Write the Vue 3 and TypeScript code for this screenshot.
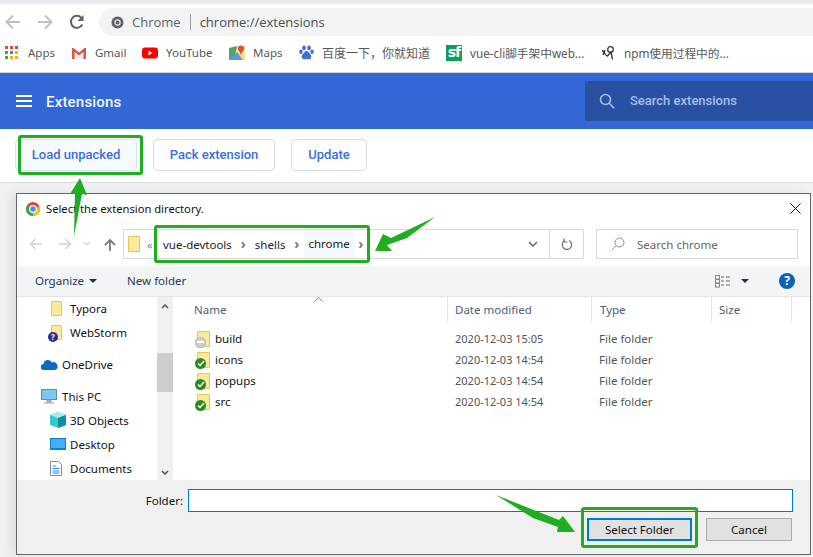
<template>
  <div class="page">
    <div class="top-strip"></div>
    <div class="toolbar">
      <svg class="nav-ico" width="16" height="16" viewBox="0 0 16 16"><path d="M15 8H2M8 1.500 1.500 8 8 14.500" class="arrow-off" /></svg>
      <svg class="nav-ico fwd" width="16" height="16" viewBox="0 0 16 16"><path d="M1 8h13M8 1.500 14.500 8 8 14.500" class="arrow-off" /></svg>
      <svg class="nav-ico reload" width="16" height="16" viewBox="0 0 16 16"><path d="M13.300 10.500A6 6 0 1 1 12.400 3.800" fill="none" stroke="#5f6368" stroke-width="2" /><path d="M14.500 1v6h-6z" fill="#5f6368" /></svg>
      <div class="omnibox">
        <svg width="13" height="13" viewBox="0 0 13 13"><circle cx="6.500" cy="6.500" r="6" fill="#5f6368" /><circle cx="6.500" cy="6.500" r="2.600" fill="#5f6368" stroke="#e8eaed" stroke-width="1.200" /></svg>
        <span class="omni-site">Chrome</span>
        <span class="omni-sep"></span>
        <span class="omni-url">chrome://extensions</span>
      </div>
    </div>

    <div class="bookmarks">
      <div class="bm apps">
        <div class="apps-grid"><i v-for="(c, i) in appDots" :key="i" :style="{ background: c }"></i></div>
        <span>Apps</span>
      </div>
      <div class="bm gmail">
        <svg width="16" height="12" viewBox="0 0 16 12"><path d="M3 12V5l5 4 5-4v7z" fill="#eeeeee" /><path d="M1 12V1h1.500L8 5.500 13.500 1H15v11h-2.500V5L8 8.500 3.500 5v7z" fill="#d8574a" /></svg>
        <span>Gmail</span>
      </div>
      <div class="bm youtube">
        <svg width="16" height="12" viewBox="0 0 16 12"><rect width="16" height="11" y="0.500" rx="3" fill="#f00" /><path d="m6.500 3.500 4 2.500-4 2.500z" fill="#fff" /></svg>
        <span>YouTube</span>
      </div>
      <div class="bm maps">
        <svg width="16" height="15" viewBox="0 0 16 15"><path d="M0 3 8 1v13l-8 1z" fill="#4fa564" /><path d="M8 1h8v14H5z" fill="#f3e08a" /><path d="M0 15 8 7l6 8z" fill="#5a9ae8" /><circle cx="12" cy="3.500" r="3" fill="#d84b3e" /><path d="m10 5 2 5 2-5z" fill="#d84b3e" /></svg>
        <span>Maps</span>
      </div>
      <div class="bm baidu">
        <svg width="15" height="15" viewBox="0 0 15 15" fill="#3e6fdc"><ellipse cx="5" cy="3" rx="1.800" ry="2.400" /><ellipse cx="10" cy="3" rx="1.800" ry="2.400" /><ellipse cx="1.900" cy="6.800" rx="1.700" ry="2.200" /><ellipse cx="13.100" cy="6.800" rx="1.700" ry="2.200" /><path d="M7.500 6c2 0 2.500 2 4 3.500s1 5-2 5c-1 0-1.300-.4-2-.4s-1 .4-2 .4c-3 0-3.500-3.500-2-5S5.500 6 7.500 6z" /></svg>
        <span class="cjk">百度一下，你就知道</span>
      </div>
      <div class="bm sf">
        <div class="sf-logo">sf</div>
        <span class="cjk">vue-cli脚手架中web...</span>
      </div>
      <div class="bm npm">
        <svg width="15" height="15" viewBox="0 0 15 15" fill="none" stroke="#333" stroke-width="1.300"><circle cx="9.500" cy="4.500" r="2.800" /><path d="M1 5.500c2 .5 3 5 5.500 5.500L10 7l1.500 7.500M2 10l2-5" /></svg>
        <span class="cjk">npm使用过程中的...</span>
      </div>
    </div>

    <header class="ext-header">
      <div class="burger"><i></i><i></i><i></i></div>
      <h1>Extensions</h1>
      <div class="ext-search">
        <svg width="16" height="16" viewBox="0 0 16 16" fill="none" stroke="#a8bde8" stroke-width="1.600"><circle cx="6.500" cy="6.500" r="5" /><path d="m10.200 10.200 5 5" /></svg>
        <span>Search extensions</span>
      </div>
    </header>

    <div class="ext-actions">
      <button class="ext-btn first">Load unpacked</button>
      <button class="ext-btn pack">Pack extension</button>
      <button class="ext-btn update">Update</button>
    </div>

    <div class="dialog">
      <div class="title-row">
        <svg width="14" height="14" viewBox="0 0 14 14"><circle cx="7" cy="7" r="7" fill="#e0453a" /><path d="M7 7 1 3.500A7 7 0 0 0 7 14z" fill="#35a853" /><path d="M7 7v7a7 7 0 0 0 6.500-9.500z" fill="#fbc115" /><circle cx="7" cy="7" r="3.300" fill="#4a8cf0" stroke="#fff" stroke-width="1.200" /></svg>
        <span class="title-text">Select the extension directory.</span>
        <svg class="close" width="11" height="11" viewBox="0 0 11 11"><path d="m.5.500 10 10m0-10-10 10" stroke="#111" stroke-width="1" /></svg>
      </div>

      <div class="path-row">
        <svg width="14" height="12" viewBox="0 0 14 12" class="dlg-arrow"><path d="M13 6H2M6.500 1 1.500 6l5 5" fill="none" stroke="#d4d4d4" stroke-width="1.500" /></svg>
        <svg width="14" height="12" viewBox="0 0 14 12" class="dlg-arrow fwd2"><path d="M1 6h11M7.500 1l5 5-5 5" fill="none" stroke="#d4d4d4" stroke-width="1.500" /></svg>
        <svg width="8" height="6" viewBox="0 0 8 6" class="dlg-drop"><path d="m1 1 3 3 3-3" fill="none" stroke="#d4d4d4" stroke-width="1.200" /></svg>
        <svg width="12" height="13" viewBox="0 0 12 13" class="dlg-up"><path d="M6 13V2M1 7l5-5 5 5" fill="none" stroke="#7a7a7a" stroke-width="1.800" /></svg>
        <div class="address">
          <div class="folder-ico crumb-folder"></div>
          <span class="chev-double">«</span>
          <span class="crumb c1">vue-devtools</span><span class="sep">›</span>
          <span class="crumb c2">shells</span><span class="sep">›</span>
          <span class="crumb c3">chrome</span><span class="sep last">›</span>
          <div class="addr-end">
            <svg width="10" height="6" viewBox="0 0 10 6"><path d="m1 1 4 4 4-4" fill="none" stroke="#666" stroke-width="1.500" /></svg>
          </div>
          <div class="addr-refresh">
            <svg width="12" height="13" viewBox="0 0 12 13"><path d="M3.500 2.800a4.700 4.700 0 1 0 4.500-.2" fill="none" stroke="#777" stroke-width="1.300" /><path d="M3 .5v3.500h3.500" fill="none" stroke="#777" stroke-width="1.200" /></svg>
          </div>
        </div>
        <div class="dlg-search">
          <svg width="14" height="14" viewBox="0 0 14 14" fill="none" stroke="#8a8a8a"><circle cx="8.500" cy="5.500" r="4.500" /><path d="m5.200 8.800-4.500 4.500" stroke="#c0856a" /></svg>
          <span>Search chrome</span>
        </div>
      </div>

      <div class="command-bar">
        <span class="cmd organize">Organize</span>
        <i class="caret"></i>
        <span class="cmd newfolder">New folder</span>
        <svg class="view-ico" width="16" height="13" viewBox="0 0 16 13" fill="none" stroke="#8a8a8a"><rect x=".5" y=".5" width="4" height="3.500" /><rect x=".5" y="4.500" width="4" height="3.500" /><rect x=".5" y="8.500" width="4" height="3.500" stroke="#c66" /><path d="M6 2h3m2 0h4M6 6h3m2 0h4M6 10h3m2 0h4" stroke="#666" /></svg>
        <i class="caret view-caret"></i>
        <div class="help">?</div>
      </div>

      <div class="browser">
        <aside class="tree">
          <div v-for="n in treeItems" :key="n.label" class="tree-item" :class="n.cls">
            <span class="tree-ico">
              <template v-if="n.icon === 'folder'"><div class="folder-ico"></div></template>
              <template v-else-if="n.icon === 'webstorm'"><div class="folder-ico"></div><b class="q-badge">?</b></template>
              <svg v-else-if="n.icon === 'cloud'" width="17" height="11" viewBox="0 0 17 11"><path d="M3 11a3 3 0 0 1-.5-6A4.500 4.500 0 0 1 11 3.500 3.500 3.500 0 0 1 14 11z" fill="#0f68c8" /></svg>
              <svg v-else-if="n.icon === 'pc'" width="16" height="15" viewBox="0 0 16 15"><rect x=".5" y=".5" width="15" height="10" fill="#7cc8f5" stroke="#6b8aa0" /><path d="M6 11h4v2H6zM3 14h10" stroke="#8a9aa8" fill="#ccd" /></svg>
              <svg v-else-if="n.icon === 'cube'" width="16" height="16" viewBox="0 0 16 16"><path d="M8 0 16 3v10l-8 3-8-3V3z" fill="#3dc5cf" /><path d="M0 3l8 3 8-3-8-3z" fill="#a7edf0" /><path d="M8 6v10l8-3V3z" fill="#0e8ea5" /></svg>
              <svg v-else-if="n.icon === 'desktop'" width="16" height="12" viewBox="0 0 16 12"><rect width="16" height="12" fill="#0f7fd6" /><rect x="1" y="1" width="14" height="9" fill="#45aef0" /></svg>
              <svg v-else width="12" height="15" viewBox="0 0 12 15"><path d="M.5.500h8l3 3v11H.5z" fill="#fff" stroke="#8a8a8a" /><path d="M2.500 5h4M2.500 7.500h7M2.500 10h7M2.500 12h7" stroke="#2c86d8" /></svg>
            </span>
            <span class="tree-label">{{ n.label }}</span>
          </div>
        </aside>
        <div class="tree-scroll">
          <svg width="8" height="5" viewBox="0 0 8 5"><path d="m1 4 3-3 3 3" fill="none" stroke="#555" stroke-width="1.500" /></svg>
          <div class="thumb"></div>
          <svg class="down" width="8" height="5" viewBox="0 0 8 5"><path d="m1 1 3 3 3-3" fill="none" stroke="#555" stroke-width="1.500" /></svg>
        </div>
        <div class="files">
          <div class="file-head">
            <span class="h-name">Name</span>
            <span class="h-date">Date modified</span>
            <span class="h-type">Type</span>
            <span class="h-size">Size</span>
            <svg class="sort-caret" width="9" height="5" viewBox="0 0 9 5"><path d="m.5 4.500 4-4 4 4" fill="none" stroke="#888" /></svg>
          </div>
          <div class="file-list">
            <div v-for="f in files" :key="f.name" class="file-row">
              <span class="file-ico">
                <div class="folder-ico"></div>
                <i class="file-badge" :class="{ skip: f.skip }"><svg v-if="!f.skip" width="8" height="7" viewBox="0 0 8 7"><path d="m1 3.500 2 2 4-4.500" fill="none" stroke="#fff" stroke-width="1.500" /></svg></i>
              </span>
              <span class="f-name">{{ f.name }}</span>
              <span class="f-date">{{ f.date }}</span>
              <span class="f-type">File folder</span>
            </div>
          </div>
        </div>
      </div>

      <div class="footer">
        <div class="folder-row">
          <label>Folder:</label>
          <div class="folder-input"></div>
        </div>
        <div class="footer-btns">
          <button class="win-btn primary">Select Folder</button>
          <button class="win-btn cancel">Cancel</button>
        </div>
      </div>
    </div>

    <!-- annotations drawn on top of the screenshot -->
    <div class="mark m1"></div>
    <div class="mark m2"></div>
    <div class="mark m3"></div>
    <svg class="arrows" width="813" height="557" viewBox="0 0 813 557">
      <path d="M80 178 87 195 82 194 74 236 75 193 70 194z" fill="#1fae1f" />
      <path d="M375 251 383 234 391 238 435 217 407 238 387 245 392 251z" fill="#1fae1f" />
      <path d="M496 495 559 520 563 516 575 532 557 532 558 527 533 518z" fill="#1fae1f" />
    </svg>
  </div>
</template>

<script setup lang="ts">
interface TreeItem {
  label: string
  icon: string
  cls: string
}

const appDots = ['#e8453c', '#e8453c', '#e8453c', '#34a853', '#4285f4', '#f4b400', '#34a853', '#f4b400', '#f4b400']

const treeItems: TreeItem[] = [
  { label: 'Typora', icon: 'folder', cls: 'lvl2' },
  { label: 'WebStorm', icon: 'webstorm', cls: 'lvl2' },
  { label: 'OneDrive', icon: 'cloud', cls: 'lvl1 gap' },
  { label: 'This PC', icon: 'pc', cls: 'lvl1 gap' },
  { label: '3D Objects', icon: 'cube', cls: 'lvl2' },
  { label: 'Desktop', icon: 'desktop', cls: 'lvl2' },
  { label: 'Documents', icon: 'doc', cls: 'lvl2' },
]

const files = [
  { name: 'build', date: '2020-12-03 15:05', skip: true },
  { name: 'icons', date: '2020-12-03 14:54', skip: false },
  { name: 'popups', date: '2020-12-03 14:54', skip: false },
  { name: 'src', date: '2020-12-03 14:54', skip: false },
]
</script>

<style>
html, body {
  margin: 0;
  background: #fff;
}
</style>

<style scoped>
.page {
  position: relative;
  width: 813px;
  height: 557px;
  overflow: hidden;
  background: #f1f2f3;
  font-family: "Noto Sans", "Noto Sans CJK SC", sans-serif;
}
.top-strip {
  height: 4px;
  background: #e8eaed;
}
.toolbar {
  height: 32px;
  background: #fff;
  display: flex;
  align-items: center;
  padding: 4px 0 0 5px;
  box-sizing: border-box;
}
.nav-ico {
  flex: none;
}
.nav-ico.fwd {
  margin-left: 16px;
}
.nav-ico.reload {
  margin-left: 16px;
}
.arrow-off {
  fill: none;
  stroke: #bdc1c6;
  stroke-width: 2;
}
.omnibox {
  flex: 1;
  margin-left: 14px;
  height: 28px;
  border-radius: 14px 0 0 14px;
  background: #f1f3f4;
  display: flex;
  align-items: center;
  padding-left: 12px;
  font-family: "Open Sans", sans-serif;
  font-size: 13px;
}
.omni-site {
  margin-left: 8px;
  color: #5f6368;
}
.omni-sep {
  width: 1px;
  height: 16px;
  background: #9aa0a6;
  margin: 0 9px;
}
.omni-url {
  color: #4a4d51;
}
.bookmarks {
  height: 37px;
  background: #fff;
  border-bottom: 1px solid #d3d5d8;
  box-sizing: border-box;
  display: flex;
  align-items: center;
  padding: 0 0 3px 5px;
  font-size: 11.500px;
  color: #55585c;
}
.bm {
  display: flex;
  align-items: center;
  gap: 8px;
  white-space: nowrap;
}
.apps { width: 66px; gap: 10px; }
.apps-grid {
  width: 13px;
  flex: none;
  display: grid;
  grid-template-columns: repeat(3, 3px);
  gap: 2px;
}
.apps-grid i {
  width: 3px;
  height: 3px;
}
.gmail { width: 71px; }
.youtube { width: 87px; }
.maps { width: 70px; }
.baidu { width: 147px; }
.baidu .cjk { font-size: 12px; }
.sf { width: 155px; }
.sf .cjk { font-size: 11.700px; }
.sf-logo {
  width: 16px;
  height: 16px;
  background: #0f9d58;
  color: #fff;
  font: 700 14px/15px "DejaVu Sans", sans-serif;
  text-align: center;
  letter-spacing: -1px;
}
.npm { gap: 8px; }
.npm .cjk { font-size: 11.700px; }
.ext-header {
  height: 56px;
  background: #3367d6;
  display: flex;
  align-items: center;
  padding-left: 16px;
  box-sizing: border-box;
}
.burger {
  width: 16px;
  display: flex;
  flex-direction: column;
  gap: 3px;
}
.burger i {
  height: 2px;
  background: #fff;
}
.ext-header h1 {
  margin: 1px 0 0 14px;
  font: 500 15px Roboto, sans-serif;
  color: #f2f5fc;
  letter-spacing: 0.2px;
}
.ext-search {
  margin-left: auto;
  width: 228px;
  height: 40px;
  align-self: flex-start;
  margin-top: 8px;
  background: #2a50a3;
  border-radius: 2px 0 0 2px;
  display: flex;
  align-items: center;
  padding: 0 0 1px 14px;
  box-sizing: border-box;
  gap: 15px;
  color: #a8bde8;
  font: 500 13px Roboto, sans-serif;
}
.ext-actions {
  height: 54px;
  background: #fff;
  border-bottom: 1px solid #d8dadd;
  box-sizing: border-box;
  display: flex;
  align-items: center;
  padding: 0 0 1px 15px;
}
.ext-btn {
  height: 32px;
  border: 1px solid #dadce0;
  border-radius: 4px;
  background: #fff;
  color: #3b6fe0;
  font: 500 13px Roboto, sans-serif;
  padding: 0 0 2px;
}
.ext-btn.first {
  width: 122px;
  background: #f6f9fe;
  border-color: #d4e3fa;
}
.ext-btn.pack {
  width: 122px;
  margin-left: 16px;
}
.ext-btn.update {
  width: 76px;
  margin-left: 16px;
}
/* the file dialog floats over the page */
.dialog {
  position: absolute;
  left: 16px;
  top: 193px;
  width: 795px;
  height: 362px;
  box-sizing: border-box;
  border: 1px solid #666;
  background: #fff;
  box-shadow: -6px 0 10px rgba(0, 0, 0, 0.08);
  display: flex;
  flex-direction: column;
  font-size: 11.500px;
  color: #111;
}
.title-row {
  height: 29px;
  flex: none;
  display: flex;
  align-items: center;
  padding: 0 9px 0 9px;
  gap: 6px;
}
.title-text {
  font-size: 11.200px;
}
.close {
  margin-left: auto;
}
.path-row {
  height: 43px;
  flex: none;
  display: flex;
  align-items: flex-start;
  padding-top: 6px;
  box-sizing: border-box;
}
.dlg-arrow {
  margin: 9px 0 0 12px;
}
.dlg-arrow.fwd2 {
  margin-left: 15px;
}
.dlg-drop {
  margin: 12px 0 0 11px;
}
.dlg-up {
  margin: 9px 0 0 13px;
}
.address {
  margin-left: 7px;
  width: 461px;
  height: 30px;
  border: 1px solid #d9d9d9;
  box-sizing: border-box;
  display: flex;
  align-items: center;
  padding-left: 4px;
  color: #222;
}
.folder-ico {
  width: 11px;
  height: 15px;
  background: #fce99a;
  border: 1px solid #e6c45c;
  box-sizing: border-box;
  border-radius: 1px;
}
.crumb-folder {
  width: 12px;
  height: 16px;
}
.chev-double {
  margin-left: 7px;
  color: #888;
  font-size: 11px;
  width: 16px;
}
.crumb { white-space: nowrap; }
.crumb.c3 {
  background: #f3f9fe;
  height: 28px;
  line-height: 27px;
  padding: 0 5px 0 4px;
  margin-left: -4px;
}
.sep {
  width: 23px;
  text-align: center;
  color: #777;
  font-size: 14px;
  font-weight: 700;
  line-height: 16px;
}
.sep.last {
  width: 12px;
}
.addr-end {
  margin-left: auto;
  width: 32px;
  display: flex;
  justify-content: center;
}
.addr-refresh {
  width: 33px;
  height: 28px;
  border-left: 1px solid #d9d9d9;
  display: flex;
  align-items: center;
  justify-content: center;
}
.dlg-search {
  margin-left: 12px;
  width: 202px;
  height: 30px;
  border: 1px solid #d9d9d9;
  box-sizing: border-box;
  display: flex;
  align-items: center;
  padding-left: 14px;
  gap: 12px;
  color: #666;
}
.command-bar {
  height: 31px;
  flex: none;
  background: #f3f4f6;
  border-bottom: 1px solid #e5e5e5;
  box-sizing: border-box;
  display: flex;
  align-items: center;
  padding-left: 18px;
  color: #2a3a55;
}
.cmd {
  margin-top: -2px;
}
.caret {
  width: 0;
  height: 0;
  border: 4px solid transparent;
  border-top: 4px solid #1d2f50;
  border-bottom: 0;
  margin-left: 5px;
}
.cmd.newfolder {
  margin-left: 30px;
}
.view-ico {
  margin-left: auto;
}
.view-caret {
  margin: 0 0 0 10px;
}
.help {
  margin: 0 15px 0 30px;
  width: 16px;
  height: 16px;
  border-radius: 50%;
  background: #0b62b8;
  color: #fff;
  font-weight: 700;
  font-size: 12px;
  line-height: 16px;
  text-align: center;
}
.browser {
  flex: 1;
  min-height: 0;
  display: flex;
}
.tree {
  width: 140px;
  flex: none;
  margin-top: -1px;
}
.tree-item {
  height: 24px;
  display: flex;
  align-items: center;
}
.tree-item.gap {
  margin-top: 8px;
}
.tree-item.lvl1 { padding-left: 24px; }
.tree-item.lvl2 { padding-left: 33px; }
.tree-ico {
  position: relative;
  width: 20px;
  height: 16px;
  display: flex;
  align-items: center;
  flex: none;
}
.lvl1 .tree-ico {
  width: 21px;
}
.lvl2 .tree-ico .folder-ico {
  margin-left: 1px;
}
.q-badge {
  position: absolute;
  left: -2px;
  bottom: -2px;
  width: 10px;
  height: 10px;
  border-radius: 50%;
  background: #2c2c8c;
  color: #fff;
  font-size: 8px;
  line-height: 10px;
  text-align: center;
}
.tree-label {
  white-space: nowrap;
}
.tree-scroll {
  position: relative;
  width: 16px;
  flex: none;
  background: #f0f0f0;
  display: flex;
  flex-direction: column;
  align-items: center;
  padding-top: 7px;
  box-sizing: border-box;
}
.thumb {
  position: absolute;
  left: 0;
  top: 56px;
  width: 16px;
  height: 39px;
  background: #cdcdcd;
}
.tree-scroll .down {
  position: absolute;
  left: 4px;
  bottom: 5px;
}
.files {
  flex: 1;
  margin-left: 2px;
  min-width: 0;
}
.file-head {
  position: relative;
  height: 26px;
  display: flex;
  color: #4c607a;
  line-height: 26px;
}
.file-head span {
  border-right: 1px solid #e5e5e5;
  padding-left: 7px;
  box-sizing: border-box;
}
.h-name { width: 273px; padding-left: 19px !important; }
.h-date { width: 144px; }
.h-type { width: 120px; padding-left: 8px !important; }
.h-size { width: 80px; }
.sort-caret {
  position: absolute;
  left: 139px;
  top: 0;
}
.file-list {
  padding-top: 5px;
}
.file-row {
  height: 21px;
  display: flex;
  align-items: center;
  padding-left: 20px;
}
.file-ico {
  position: relative;
  width: 20px;
  height: 16px;
  flex: none;
}
.file-ico .folder-ico {
  margin-left: 2px;
  width: 13px;
  height: 16px;
}
.file-badge {
  position: absolute;
  left: 0;
  bottom: -1px;
  width: 11px;
  height: 11px;
  border-radius: 50%;
  background: #2c8a1e;
  display: flex;
  align-items: center;
  justify-content: center;
}
.file-badge.skip {
  background: #d0d0d0;
  box-shadow: inset 0 0 0 1px #bbb;
}
.file-badge.skip::after {
  content: "";
  width: 7px;
  height: 2px;
  background: #fff;
}
.f-name {
  width: 240px;
}
.f-date {
  width: 144px;
  color: #555;
  font-size: 11px;
}
.f-type {
  color: #555;
}
.footer {
  height: 74px;
  flex: none;
  background: #f0f0f0;
  padding: 9px 17px 0 0;
  box-sizing: border-box;
}
.folder-row {
  display: flex;
  align-items: center;
  justify-content: flex-end;
}
.folder-row label {
  margin-right: 5px;
}
.folder-input {
  width: 605px;
  height: 23px;
  background: #fff;
  border: 1px solid #0078d7;
  box-sizing: border-box;
}
.footer-btns {
  display: flex;
  justify-content: flex-end;
  gap: 14px;
  margin: 6px 1px 0 0;
}
.win-btn {
  height: 23px;
  background: #e1e1e1;
  border: 1px solid #adadad;
  box-sizing: border-box;
  font: 11.500px "Noto Sans", sans-serif;
  color: #111;
  padding: 0;
}
.win-btn.primary {
  width: 105px;
  border: 2px solid #0078d7;
}
.win-btn.cancel {
  width: 86px;
}
.mark {
  position: absolute;
  border: 3px solid #1fae1f;
  border-radius: 3px;
  box-sizing: border-box;
}
.m1 { left: 18px; top: 135px; width: 125px; height: 40px; }
.m2 { left: 154px; top: 225px; width: 216px; height: 38px; }
.m3 { left: 581px; top: 507px; width: 117px; height: 41px; }
.arrows {
  position: absolute;
  left: 0;
  top: 0;
  pointer-events: none;
}
</style>
